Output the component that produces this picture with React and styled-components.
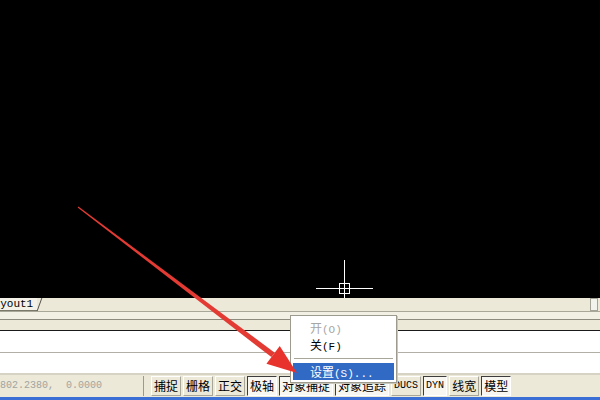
import React from "react";
import styled, { createGlobalStyle } from "styled-components";

const Global = createGlobalStyle`
  html, body { margin: 0; padding: 0; background: #000; overflow: hidden; }
  body { width: 600px; height: 400px; }
`;

const CJK = `"Noto Sans CJK SC", "Liberation Sans", sans-serif`;
const MONO = `"Liberation Mono", "Noto Sans CJK SC", monospace`;

const Frame = styled.div`
  position: relative;
  width: 600px;
  height: 400px;
  display: flex;
  flex-direction: column;
  background: #ece9d8;
`;

//drawing area
const Canvas = styled.div`
  position: relative;
  height: 298px;
  background: #000;
  flex-shrink: 0;
`;

const TabRow = styled.div`
  height: 13px;
  border-bottom: 1px solid #a9a797;
  display: flex;
  align-items: stretch;
  overflow: hidden;
  background: #ece9d8;
`;

const Tab = styled.div`
  position: relative;
  margin-left: -13px;
  padding-right: 4px;
  font-family: ${MONO};
  font-size: 11px;
  line-height: 13px;
  color: #000;
  background: #f4f2e8;
  border-bottom: 1px solid #7a7868;

  &::after {
    content: "";
    position: absolute;
    right: -3px;
    top: 0;
    bottom: -1px;
    width: 0;
    border-right: 1px solid #55544a;
    transform: skewX(-20deg);
  }
`;

const ScrollStub = styled.div`
  margin-left: auto;
  margin-right: 2px;
  width: 6px;
  border: 1px solid #a3a398;
  background: #f3f3ee;
`;

const Splitter = styled.div`
  height: 7px;
  background: #f2f0e5;
  border-bottom: 1px solid #8d8b7e;
`;

const CmdHeader = styled.div`
  height: 10px;
  background: #ece9d8;
  border-bottom: 1px solid #1a1a1a;
`;

const CmdLine = styled.div`
  height: ${p => p.h}px;
  background: #fff;
  border-bottom: ${p => (p.sep ? "1px solid #b2b0a6" : "none")};
`;

const StatusBar = styled.div`
  height: 22px;
  border-top: 2px solid #d6d3c4;
  display: flex;
  align-items: center;
  gap: 2px;
  background: #ece9d8;
`;

const Coords = styled.div`
  width: 143px;
  height: 20px;
  margin-right: 5px;
  border-right: 1px solid #9c9a8c;
  font-family: ${MONO};
  font-size: 10px;
  line-height: 20px;
  color: #a3a3a0;
  white-space: pre;
  overflow: hidden;
`;

const StatusBtn = styled.div`
  height: 18px;
  padding: 0 2px;
  font-family: ${p => (p.latin ? MONO : CJK)};
  font-size: ${p => (p.latin ? "10px" : "12px")};
  line-height: 18px;
  color: #000;
  background: ${p => (p.on ? "#f7f6f0" : "#ece9d8")};
  border: 1px solid;
  border-color: ${p =>
    p.on ? "#3c3c3c #ffffff #ffffff #3c3c3c" : "#ffffff #a8a698 #a8a698 #ffffff"};
`;

const Taskbar = styled.div`
  height: 3px;
  background: #3b6fd6;
`;

//right click popup
const Menu = styled.div`
  position: absolute;
  left: 290px;
  top: 315px;
  width: 101px;
  padding: 3px 2px 2px 2px;
  background: #fff;
  border: 1px solid #9d9b8d;
  box-shadow: 1px 1px 0 #c9c7bb;
`;

const MenuItem = styled.div`
  height: 17px;
  padding-left: 17px;
  font-family: ${CJK};
  font-size: 12px;
  line-height: 17px;
  color: ${p => (p.disabled ? "#a6a6a6" : p.active ? "#fff" : "#000")};
  background: ${p => (p.active ? "#316ac5" : "transparent")};
  white-space: pre;

  span {
    font-family: ${MONO};
    font-size: 11px;
  }
`;

const MenuSep = styled.div`
  height: 10px;
  display: flex;
  align-items: center;
  padding: 0 1px;

  &::before {
    content: "";
    flex: 1;
    border-top: 1px solid #a8a698;
  }
`;

const Overlay = styled.svg`
  position: absolute;
  left: 0;
  top: 0;
  pointer-events: none;
`;

const Cursor = () => (
  <Overlay width="600" height="298" viewBox="0 0 600 298">
    <g stroke="#fff" strokeWidth="1" fill="none" shapeRendering="crispEdges">
      <line x1="316" y1="288.5" x2="373" y2="288.5" />
      <line x1="344.5" y1="260" x2="344.5" y2="298" />
      <rect x="339.5" y="283.5" width="10" height="10" />
    </g>
  </Overlay>
);

const Arrow = () => {
  const tail = [78, 207];
  const tip = [297, 373];
  const dx = tip[0] - tail[0];
  const dy = tip[1] - tail[1];
  const len = Math.hypot(dx, dy);
  const u = [dx / len, dy / len];
  const n = [-u[1], u[0]];
  const base = [tip[0] - 30 * u[0], tip[1] - 30 * u[1]];
  const pt = (p, k) => `${p[0] + k * n[0]},${p[1] + k * n[1]}`;
  const shaft = [pt(tail, 0.6), pt(base, 2.8), pt(base, -2.8), pt(tail, -0.6)].join(" ");
  const head = [`${tip[0]},${tip[1]}`, pt(base, 11), pt(base, -11)].join(" ");
  return (
    <Overlay width="600" height="400" viewBox="0 0 600 400">
      <polygon points={shaft} fill="#e33b33" />
      <polygon points={head} fill="#e8332c" />
    </Overlay>
  );
};

const buttons = [
  { t: "捕捉" },
  { t: "栅格" },
  { t: "正交" },
  { t: "极轴", on: true },
  { t: "对象捕捉", on: true },
  { t: "对象追踪", on: true },
  { t: "DUCS", latin: true },
  { t: "DYN", latin: true, on: true },
  { t: "线宽" },
  { t: "模型", on: true },
];

const App = () => (
  <>
    <Global />
    <Frame>
      <Canvas>
        <Cursor />
      </Canvas>
      <TabRow>
        <Tab>Layout1</Tab>
        <ScrollStub />
      </TabRow>
      <Splitter />
      <CmdHeader />
      <CmdLine h={21} sep />
      <CmdLine h={20} />
      <StatusBar>
        <Coords>{"802.2380,  0.0000"}</Coords>
        {buttons.map(b => (
          <StatusBtn key={b.t} on={b.on} latin={b.latin}>
            {b.t}
          </StatusBtn>
        ))}
      </StatusBar>
      <Taskbar />
      <Menu>
        <MenuItem disabled>开<span>(O)</span></MenuItem>
        <MenuItem>关<span>(F)</span></MenuItem>
        <MenuSep />
        <MenuItem active>设置<span>(S)...</span></MenuItem>
      </Menu>
      <Arrow />
    </Frame>
  </>
);

export default App;
